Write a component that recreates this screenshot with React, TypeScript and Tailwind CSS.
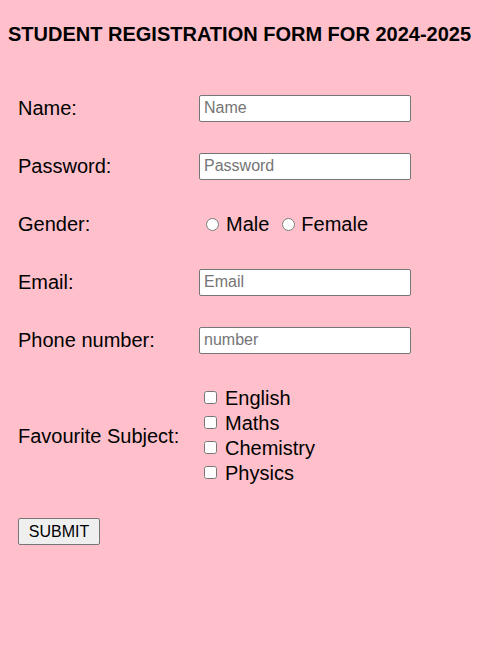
import React from "react";

const inputCls =
  "w-[212px] h-[27px] bg-white border border-[#767676] rounded-[2px] px-[4px] text-[16px] text-black placeholder:text-[#757575] outline-none";

function Row({ label, children, h = "h-[58px]" }: { label: string; children: React.ReactNode; h?: string }) {
  return (
    <div className={`flex items-center ${h}`}>
      <div className="w-[181px] text-[20px] leading-[23px]">{label}</div>
      <div className="flex items-center">{children}</div>
    </div>
  );
}

export default function App() {
  return (
    <div className="min-h-screen bg-[#ffc0cb] text-black font-['Liberation_Sans',Arial,sans-serif]">
      <h3 className="pl-2 pt-[23px] text-[20px] leading-[23px] font-bold">
        STUDENT REGISTRATION FORM FOR 2024-2025
      </h3>
      <form className="pl-[18px] mt-[33px]">
        <Row label="Name:">
          <input type="text" placeholder="Name" className={inputCls} />
        </Row>
        <Row label="Password:">
          <input type="password" placeholder="Password" className={inputCls} />
        </Row>
        <Row label="Gender:">
          <label className="flex items-center text-[20px] leading-[23px]">
            <input type="radio" name="gender" className="w-[13px] h-[13px] ml-[7px] mr-[7px]" />
            Male
          </label>
          <label className="flex items-center text-[20px] leading-[23px]">
            <input type="radio" name="gender" className="w-[13px] h-[13px] ml-[13px] mr-[6px]" />
            Female
          </label>
        </Row>
        <Row label="Email:">
          <input type="email" placeholder="Email" className={inputCls} />
        </Row>
        <Row label="Phone number:">
          <input type="text" placeholder="number" className={inputCls} />
        </Row>
        <Row label="Favourite Subject:" h="h-[134px]">
          <div className="flex flex-col">
            {["English", "Maths", "Chemistry", "Physics"].map((s) => (
              <label key={s} className="flex items-center h-[25px] text-[20px] leading-[23px]">
                <input type="checkbox" className="w-[13px] h-[13px] ml-[5px] mr-[8px] -mt-[3px]" />
                {s}
              </label>
            ))}
          </div>
        </Row>
        <button
          type="button"
          className="mt-[15px] w-[82px] h-[27px] bg-[#efefef] border border-[#767676] rounded-[2px] text-[16px] leading-[18px]"
        >
          SUBMIT
        </button>
      </form>
    </div>
  );
}
